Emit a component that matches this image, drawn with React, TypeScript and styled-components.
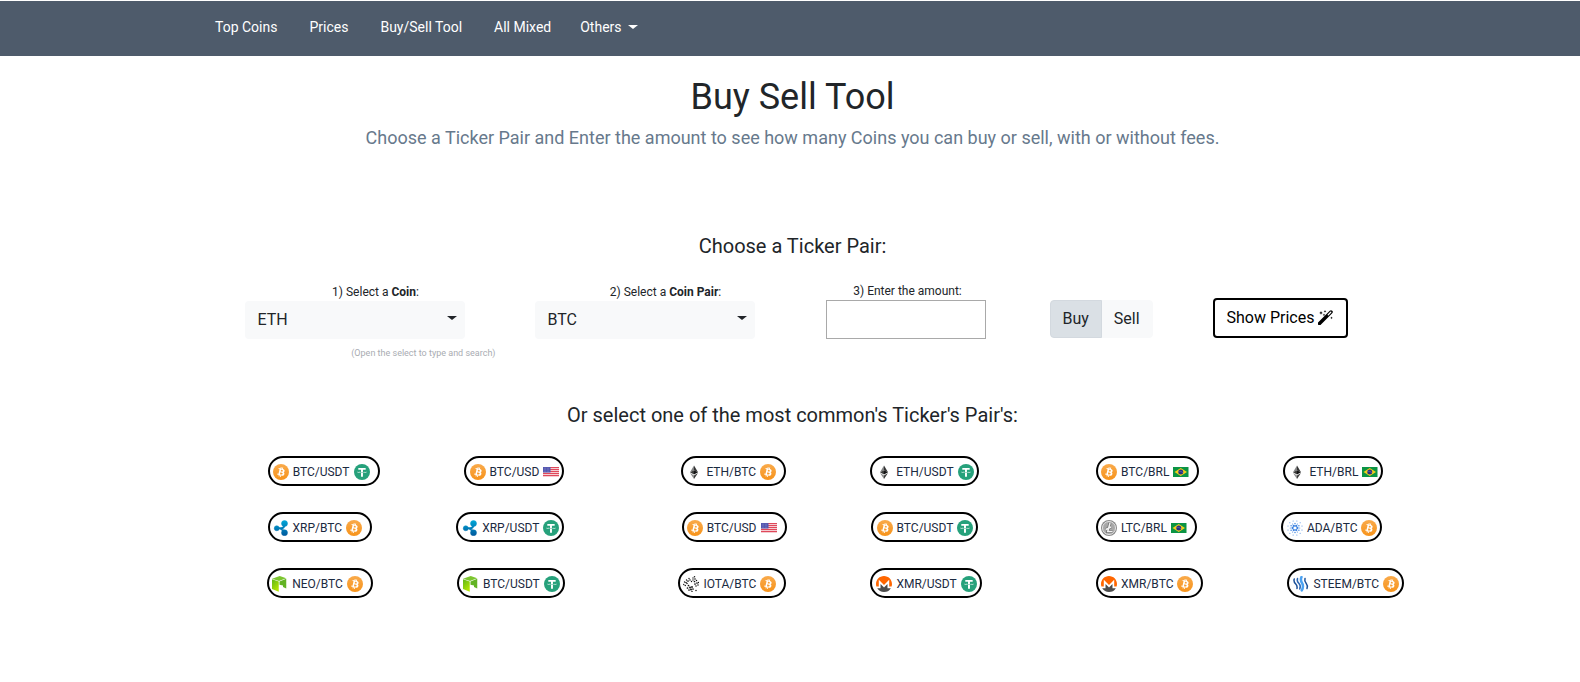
import React, { useState } from 'react';
import styled, { createGlobalStyle } from 'styled-components';

const GlobalStyle = createGlobalStyle`
  *, *::before, *::after { box-sizing: border-box; }
  body {
    margin: 0;
    background: #fff;
    color: #212529;
    font-family: Roboto, "Liberation Sans", sans-serif;
    font-size: 16px;
    line-height: 24px;
  }
  button, input, select { font: inherit; color: inherit; }
`;

/* ---------- navigation ---------- */

const NavBar = styled.nav`
  margin-top: 1px;
  height: 55px;
  padding-top: 16px;
  background: #4e5b6b;
`;

const NavInner = styled.div`
  max-width: 1150px;
  margin: 0 auto;
  display: flex;
  gap: 29px;
  font-size: 14px;
  line-height: 20px;
`;

const NavLinks = styled.div`
  display: flex;
  gap: 32px;
`;

const NavLink = styled.a`
  color: #fff;
  text-decoration: none;
`;

const Caret = styled.span`
  display: inline-block;
  border: 0 solid transparent;
  border-width: 4px 5px 0;
  border-top-color: currentColor;
`;

const NavMenuButton = styled.button`
  display: flex;
  align-items: center;
  gap: 6px;
  padding: 0;
  border: 0;
  background: none;
  color: #fff;
`;

/* ---------- page ---------- */

const Page = styled.main`
  padding: 19px 0 84px 5px;
`;

const Title = styled.h1`
  margin: 0;
  font-size: 36px;
  font-weight: 400;
  line-height: 44px;
  text-align: center;
`;

const Subtitle = styled.p`
  margin: 5px 0 0;
  font-size: 18px;
  line-height: 28px;
  text-align: center;
  color: #67798c;
`;

const SectionTitle = styled.h2<{ $above: number; $below: number }>`
  margin: ${(p) => p.$above}px 0 ${(p) => p.$below}px;
  font-size: 20px;
  font-weight: 400;
  line-height: 24px;
  text-align: center;
`;

/* ---------- form ---------- */

const PairForm = styled.form`
  max-width: 1140px;
  margin: 0 auto;
  padding: 0 15px 0 22px;
  display: grid;
  grid-template-columns: 290fr 291fr 224fr 163fr 135fr;
  align-items: start;
`;

const Field = styled.div<{ $width: number }>`
  width: ${(p) => p.$width}px;
  display: flex;
  flex-direction: column;
`;

const Label = styled.label<{ $line: number; $indent: number }>`
  padding-left: ${(p) => p.$indent}px;
  font-size: 12px;
  line-height: ${(p) => p.$line}px;
  text-align: center;
`;

const SelectWrap = styled.div`
  position: relative;
  width: 220px;
`;

const Select = styled.select`
  display: block;
  width: 100%;
  height: 38px;
  padding: 0 32px 0 13px;
  border: 0;
  border-radius: 4px;
  background: #f8f9fa;
  appearance: none;
`;

const SelectCaret = styled(Caret)`
  position: absolute;
  top: 15px;
  right: 8px;
  pointer-events: none;
`;

const Hint = styled.small`
  margin-top: 8px;
  padding-right: 9px;
  font-size: 9px;
  line-height: 12px;
  text-align: right;
  color: #a9acb2;
`;

const AmountInput = styled.input`
  width: 100%;
  height: 39px;
  padding: 0 8px;
  border: 1px solid #a9a9a9;
  background: #fff;
`;

const Toggle = styled.div`
  display: flex;
  margin-top: 17px;
`;

const ToggleButton = styled.button<{ $active: boolean }>`
  position: relative;
  z-index: ${(p) => (p.$active ? 1 : 0)};
  height: 38px;
  padding: 0 12px;
  border: 1px solid ${(p) => (p.$active ? '#d3d9df' : '#f8f9fa')};
  background: ${(p) => (p.$active ? '#dae0e5' : '#f8f9fa')};
  &:first-child { border-radius: 4px 0 0 4px; }
  &:last-child { margin-left: -1px; border-radius: 0 4px 4px 0; }
`;

const ShowButton = styled.button`
  display: flex;
  align-items: center;
  justify-content: center;
  gap: 4px;
  height: 40px;
  margin-top: 15px;
  padding: 0;
  border: 2px solid #000;
  border-radius: 4px;
  background: #fff;
  color: #000;
  white-space: nowrap;
`;

const WandSvg = styled.svg`
  width: 15px;
  height: 15px;
  margin-bottom: 2px;
`;

const Wand = () => (
  <WandSvg viewBox="0 0 30 30" aria-hidden="true">
    <path d="M3 27L26 4" stroke="#000" strokeWidth="7" strokeLinecap="round" />
    <path d="M20.500 9.500L25.500 4.500" stroke="#fff" strokeWidth="2.500" strokeLinecap="round" />
    <path
      fill="#000"
      d="M6 2l1 2.500L9.500 6 7 7 6 9.500 5 7 2.500 6 5 4.500zM14 0l.8 2 2 .8-2 .8-.8 2-.8-2-2-.8 2-.8zM12 7l.8 2 2 .8-2 .8-.8 2-.8-2-2-.8 2-.8zM27 13l.8 2 2 .8-2 .8-.8 2-.8-2-2-.8 2-.8z"
    />
  </WandSvg>
);

/* ---------- common pairs ---------- */

const PairGrid = styled.div`
  max-width: 1317px;
  margin: 0 auto;
  padding-left: 75px;
  display: grid;
  grid-template-columns: repeat(3, 1fr);
  row-gap: 26px;
`;

const PairGroup = styled.div`
  display: flex;
  justify-content: center;
  gap: 84px;
  &:nth-child(3n) {
    justify-content: flex-start;
    padding-left: 59px;
  }
`;

const PairButton = styled.button`
  display: flex;
  align-items: center;
  gap: 4px;
  height: 30px;
  padding: 1px 3px 0 4px;
  border: 2px solid #000;
  border-radius: 15px;
  background: #fff;
  color: #1b2a41;
  font-size: 12px;
  line-height: 16px;
  white-space: nowrap;
  &:first-child { padding: 1px 8px 0 3px; }
`;

const PairIcon = styled.svg`
  display: block;
  width: 16px;
  height: 16px;
  flex: none;
`;

const Btc = () => (
  <PairIcon viewBox="0 0 32 32">
    <defs>
      <linearGradient id="btcFill" x1="0" y1="0" x2="0" y2="1">
        <stop offset="0" stopColor="#f9aa4b" />
        <stop offset="1" stopColor="#f7931a" />
      </linearGradient>
    </defs>
    <circle cx="16" cy="16" r="16" fill="url(#btcFill)" />
    <path
      fill="#fff"
      d="M23.189 14.02c.314-2.096-1.283-3.223-3.465-3.975l.708-2.84-1.728-.43-.69 2.765c-.454-.114-.92-.22-1.385-.326l.695-2.783L15.596 6l-.708 2.839c-.376-.086-.746-.17-1.104-.26l.002-.009-2.384-.595-.46 1.846s1.283.294 1.256.312c.7.175.826.638.805 1.006l-.806 3.235c.048.012.11.03.18.057l-.183-.045-1.13 4.532c-.086.212-.303.531-.793.41.018.025-1.256-.313-1.256-.313l-.858 1.978 2.25.561c.418.105.828.215 1.231.318l-.715 2.872 1.727.43.708-2.84c.472.127.93.245 1.378.357l-.706 2.828 1.728.43.715-2.866c2.948.558 5.164.333 6.097-2.333.752-2.146-.037-3.385-1.588-4.192 1.13-.26 1.98-1.003 2.207-2.538zm-3.95 5.538c-.533 2.147-4.148.986-5.32.695l.95-3.805c1.172.293 4.929.872 4.37 3.11zm.535-5.569c-.487 1.953-3.495.96-4.47.717l.86-3.45c.975.243 4.118.696 3.61 2.733z"
    />
  </PairIcon>
);

const Usdt = () => (
  <PairIcon viewBox="0 0 32 32">
    <circle cx="16" cy="16" r="16" fill="#26a17b" />
    <path
      fill="#fff"
      d="M17.922 17.383v-.002c-.11.008-.677.042-1.942.042-1.01 0-1.721-.03-1.971-.042v.003c-3.888-.171-6.79-.848-6.79-1.658 0-.809 2.902-1.486 6.79-1.66v2.644c.254.018.982.061 1.988.061 1.207 0 1.812-.05 1.925-.06v-2.643c3.88.173 6.775.85 6.775 1.658 0 .81-2.895 1.485-6.775 1.657m0-3.59v-2.366h5.414V7.819H8.595v3.608h5.414v2.365c-4.4.202-7.709 1.074-7.709 2.118 0 1.044 3.309 1.915 7.709 2.118v7.582h3.913v-7.584c4.393-.202 7.694-1.073 7.694-2.116 0-1.043-3.301-1.914-7.694-2.117"
    />
  </PairIcon>
);

const Eth = () => (
  <PairIcon viewBox="0 0 32 32">
    <path fill="#828384" d="M16 3v9.6l-8 3.8z" />
    <path fill="#343434" d="M16 3v9.6l8 3.8z" />
    <path fill="#3c3c3b" d="M8 16.400l8-3.800v8.600z" />
    <path fill="#141414" d="M24 16.400l-8-3.800v8.600z" />
    <path fill="#8c8c8c" d="M8 18l8 4.800V30z" />
    <path fill="#3c3c3b" d="M24 18l-8 4.800V30z" />
  </PairIcon>
);

const Xrp = () => (
  <PairIcon viewBox="0 0 32 32">
    <defs>
      <linearGradient id="xrpFill" gradientUnits="userSpaceOnUse" x1="0" y1="0" x2="0" y2="32">
        <stop offset="0" stopColor="#00a8d8" />
        <stop offset="1" stopColor="#00589c" />
      </linearGradient>
    </defs>
    <g fill="url(#xrpFill)" stroke="url(#xrpFill)">
      <circle cx="7.500" cy="16.500" r="5" />
      <circle cx="23" cy="7" r="6" />
      <circle cx="23" cy="25.500" r="6" />
      <path d="M8 16.500h10M23 8c0 5-2 8.500-7 8.500s7 3 7 8" fill="none" strokeWidth="4" />
    </g>
  </PairIcon>
);

const Neo = () => (
  <PairIcon viewBox="0 0 32 32">
    <defs>
      <linearGradient id="neoFill" x1="0" y1="0" x2="0.600" y2="1">
        <stop offset="0" stopColor="#5fb61a" />
        <stop offset="1" stopColor="#b4e600" />
      </linearGradient>
    </defs>
    <path fill="url(#neoFill)" d="M0 6.500l13.500 4.500V31.500L0 26z" />
    <path fill="#7cc62f" d="M0 5.500L15.500 0 28.500 4.500 14 10z" />
    <path fill="#62b324" d="M15 11l13.500-5.500V25L22 22v-3l-7-1.500z" />
  </PairIcon>
);

const Iota = () => (
  <PairIcon viewBox="0 0 32 32">
    <g fill="#111">
      {[
        [3, 12, 1.3], [7, 8, 1.4], [12, 5, 1.4], [6, 13, 1.6], [10, 10, 1.7], [14, 8, 1.5],
        [1.5, 17, 1.3], [4.5, 19, 1.5], [17, 11, 1.4], [8, 15, 1.5],
        [23, 1.5, 1.5], [24, 6, 1.6], [20, 4, 1.4], [23, 11, 1.7], [27, 9, 1.5], [28, 14, 1.7],
        [24, 16, 1.7], [31, 13, 1.3], [30, 18, 1.5], [26, 20, 1.5], [20, 8, 1.4],
        [11, 19, 1.7], [9, 24, 1.7], [14, 23, 1.9], [18, 22, 1.8], [12, 28, 1.7], [16, 27, 1.9],
        [20, 26, 1.7], [18, 31, 1.4], [26, 29, 1.5],
      ].map(([x, y, r]) => (
        <circle key={`${x}-${y}`} cx={x} cy={y} r={r} />
      ))}
    </g>
  </PairIcon>
);

const Xmr = () => (
  <PairIcon viewBox="5.145 5.235 21.650 21.620">
    <path
      fill="#f60"
      d="M15.970 5.235c-5.985 0-10.825 4.840-10.825 10.824a11.070 11.070 0 00.558 3.432h3.226v-9.094l7.040 7.040 7.040-7.040v9.093h3.226a11.070 11.070 0 00.558-3.431c0-5.985-4.840-10.824-10.823-10.824z"
    />
    <path
      fill="#4c4c4c"
      d="M14.358 19.020L16 20.635l1.613-1.614 3.051-3.080v5.720h4.547a10.806 10.806 0 01-9.240 5.192c-3.902 0-7.334-2.082-9.240-5.192h4.546v-5.720l3.080 3.080z"
    />
  </PairIcon>
);

const Ltc = () => (
  <PairIcon viewBox="0 0 32 32">
    <circle cx="16" cy="16" r="16" fill="#8a8a8a" />
    <circle cx="16" cy="16" r="13" fill="#a8a8a8" stroke="#e4e4e4" strokeWidth="2" />
    <path d="M18 6l-4.500 17H23M9.500 19l10.500-5" fill="none" stroke="#6f6f6f" strokeWidth="6" />
    <path d="M18 6l-4.500 17H23M9.500 19l10.500-5" fill="none" stroke="#f2f2f2" strokeWidth="3" />
  </PairIcon>
);

const ring = (count: number, radius: number, dot: number, turn: number) =>
  Array.from({ length: count }, (_, i) => {
    const angle = ((i + turn) * 2 * Math.PI) / count;
    return (
      <circle
        key={`${radius}-${i}`}
        cx={16 + radius * Math.cos(angle)}
        cy={16 + radius * Math.sin(angle)}
        r={dot}
      />
    );
  });

const Ada = () => (
  <PairIcon viewBox="0 0 32 32">
    <g fill="#3c82e0">
      {ring(6, 4.8, 2.3, 0)}
      {ring(6, 9, 1.4, 0.5)}
      {ring(6, 9.5, 1, 0)}
      {ring(12, 14.5, 1, 0.5)}
    </g>
  </PairIcon>
);

const Steem = () => (
  <PairIcon viewBox="0 0 32 32">
    <g fill="none" strokeLinecap="round">
      <path d="M2.500 6c-1.500 4 0 7 3 10s3 6 2.500 9" stroke="#1a5099" strokeWidth="3" />
      <path d="M9 5c-1.500 4 0 7 3 10s3 7 1.500 11" stroke="#2a66b4" strokeWidth="3" />
      <path d="M17 2c-3 6-1 9 1.500 13s2 8-1 14" stroke="#4ba2f2" strokeWidth="5" />
      <path d="M24 5c-1.500 4 0 7 2.500 10s3 6 1.500 10" stroke="#1a5099" strokeWidth="3" />
    </g>
  </PairIcon>
);

const Usd = () => (
  <PairIcon viewBox="0 0 32 32">
    <rect y="6" width="32" height="20" fill="#f4cdd2" />
    <path
      d="M0 7h32M0 11h32M0 15h32M0 19h32M0 23h32"
      stroke="#e0485a"
      strokeWidth="2"
    />
    <rect y="6" width="15" height="11" fill="#5558b0" />
    <path d="M2 8.500h12M2 11.500h12M2 14.500h12" stroke="#a9abdc" strokeWidth="1" strokeDasharray="1 2" />
  </PairIcon>
);

const Brl = () => (
  <PairIcon viewBox="0 0 32 32">
    <rect y="6" width="31" height="20" fill="#0b9444" />
    <path fill="#f4cf1c" d="M15.500 8L28 16l-12.500 8L3 16z" />
    <circle cx="15.500" cy="16" r="5" fill="#28307e" />
    <path d="M11 15c3-1 6.500 0 9 2.500" stroke="#7f86b8" strokeWidth="1" fill="none" />
  </PairIcon>
);

const icons = {
  BTC: Btc, USDT: Usdt, ETH: Eth, XRP: Xrp, NEO: Neo, IOTA: Iota,
  XMR: Xmr, LTC: Ltc, ADA: Ada, STEEM: Steem, USD: Usd, BRL: Brl,
};

type Symbol = keyof typeof icons;
type Pair = { name: string; left: Symbol; right: Symbol };

const pair = (left: Symbol, right: Symbol, name = `${left}/${right}`): Pair => ({ name, left, right });

const groups: Pair[][] = [
  [pair('BTC', 'USDT'), pair('BTC', 'USD')],
  [pair('ETH', 'BTC'), pair('ETH', 'USDT')],
  [pair('BTC', 'BRL'), pair('ETH', 'BRL')],
  [pair('XRP', 'BTC'), pair('XRP', 'USDT')],
  [pair('BTC', 'USD'), pair('BTC', 'USDT')],
  [pair('LTC', 'BRL'), pair('ADA', 'BTC')],
  [pair('NEO', 'BTC'), pair('NEO', 'USDT', 'BTC/USDT')],
  [pair('IOTA', 'BTC'), pair('XMR', 'USDT')],
  [pair('XMR', 'BTC'), pair('STEEM', 'BTC')],
];

export default function App() {
  const [side, setSide] = useState<'Buy' | 'Sell'>('Buy');

  return (
    <>
      <GlobalStyle />
      <NavBar>
        <NavInner>
          <NavLinks>
            {['Top Coins', 'Prices', 'Buy/Sell Tool', 'All Mixed'].map((item) => (
              <NavLink key={item} href="#">{item}</NavLink>
            ))}
          </NavLinks>
          <NavMenuButton type="button">
            Others <Caret />
          </NavMenuButton>
        </NavInner>
      </NavBar>

      <Page>
        <Title>Buy Sell Tool</Title>
        <Subtitle>
          Choose a Ticker Pair and Enter the amount to see how many Coins you can buy or sell, with or
          without fees.
        </Subtitle>

        <SectionTitle $above={82} $below={25}>Choose a Ticker Pair:</SectionTitle>
        <PairForm onSubmit={(e) => e.preventDefault()}>
          <Field $width={260}>
            <Label $line={18} $indent={2} htmlFor="coin">1) Select a <b>Coin</b>:</Label>
            <SelectWrap>
              <Select id="coin" defaultValue="ETH">
                <option>ETH</option>
                <option>XRP</option>
                <option>NEO</option>
              </Select>
              <SelectCaret />
            </SelectWrap>
            <Hint>(Open the select to type and search)</Hint>
          </Field>
          <Field $width={260}>
            <Label $line={18} $indent={2} htmlFor="coin-pair">2) Select a <b>Coin Pair</b>:</Label>
            <SelectWrap>
              <Select id="coin-pair" defaultValue="BTC">
                <option>BTC</option>
                <option>USDT</option>
                <option>BRL</option>
              </Select>
              <SelectCaret />
            </SelectWrap>
          </Field>
          <Field $width={160}>
            <Label $line={17} $indent={4} htmlFor="amount">3) Enter the amount:</Label>
            <AmountInput id="amount" type="text" />
          </Field>
          <Toggle>
            {(['Buy', 'Sell'] as const).map((name) => (
              <ToggleButton
                key={name}
                type="button"
                $active={side === name}
                aria-pressed={side === name}
                onClick={() => setSide(name)}
              >
                {name}
              </ToggleButton>
            ))}
          </Toggle>
          <ShowButton type="submit">
            Show Prices <Wand />
          </ShowButton>
        </PairForm>

        <SectionTitle $above={44} $below={29}>
          Or select one of the most common's Ticker's Pair's:
        </SectionTitle>
        <PairGrid>
          {groups.map((group, row) => (
            <PairGroup key={row}>
              {group.map(({ name, left, right }) => {
                const Left = icons[left];
                const Right = icons[right];
                return (
                  <PairButton key={left + right} type="button">
                    <Left />
                    {name}
                    <Right />
                  </PairButton>
                );
              })}
            </PairGroup>
          ))}
        </PairGrid>
      </Page>
    </>
  );
}
